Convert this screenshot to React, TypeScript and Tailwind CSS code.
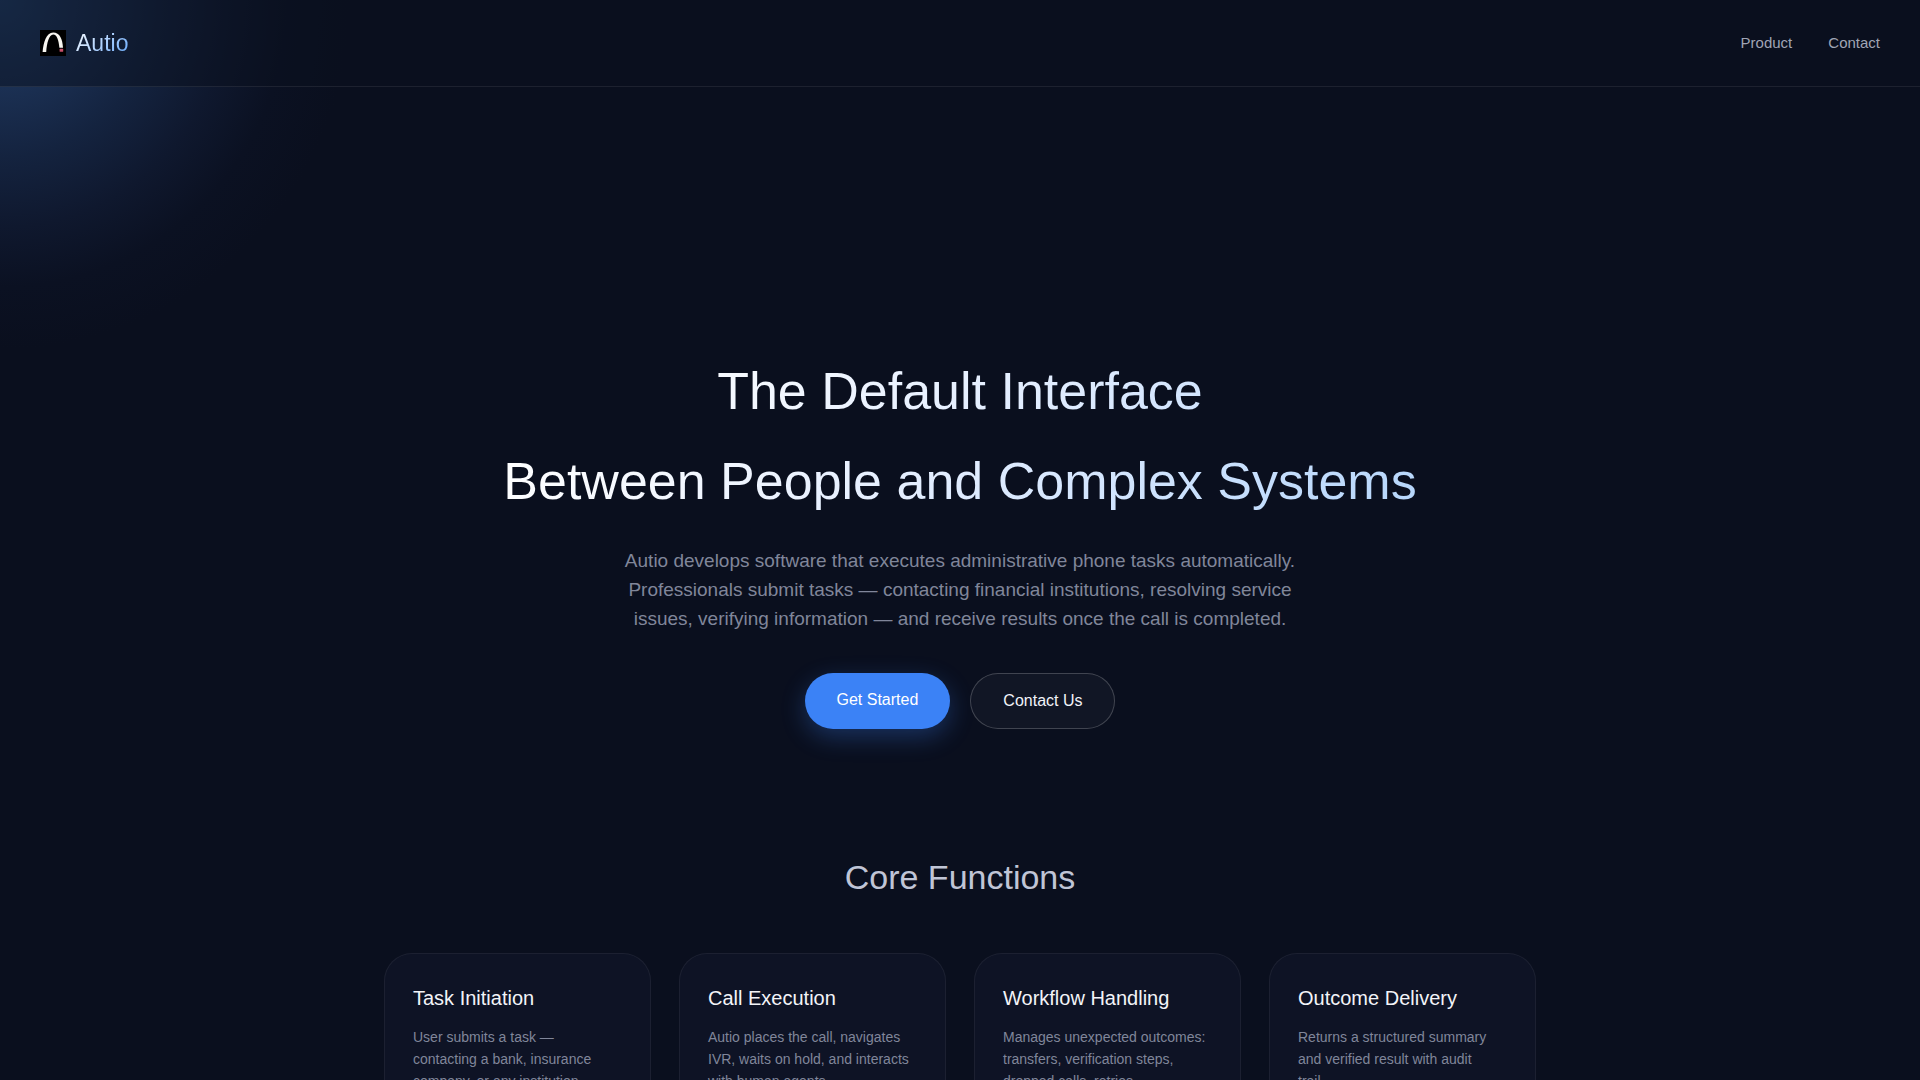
interface CoreFunction {
    title: string;
    lines: string[];
}

const navLinks = [
    { label: "Product", href: "#product" },
    { label: "Contact", href: "#contact" },
];

const coreFunctions: CoreFunction[] = [
    {
        title: "Task Initiation",
        lines: ["User submits a task —", "contacting a bank, insurance", "company, or any institution."],
    },
    {
        title: "Call Execution",
        lines: ["Autio places the call, navigates", "IVR, waits on hold, and interacts", "with human agents."],
    },
    {
        title: "Workflow Handling",
        lines: ["Manages unexpected outcomes:", "transfers, verification steps,", "dropped calls, retries."],
    },
    {
        title: "Outcome Delivery",
        lines: ["Returns a structured summary", "and verified result with audit", "trail."],
    },
];

function Logo() {
    return (
        <svg viewBox="0 0 26 26" className="size-[26px]" aria-hidden="true">
            <rect width="26" height="26" fill="#000" />
            <path
                d="M2.6 22C3.4 13 6.2 2.6 13.2 2.6C19.8 2.6 22.6 9.5 23 17.8H19.4C18.8 10.5 17 4.4 13.2 4.4C9 4.4 6.8 13 6.2 22Z"
                fill="#f8f6f0"
            />
            <rect x="19.6" y="18.8" width="3.6" height="3" rx="0.6" fill="#c8506a" />
        </svg>
    );
}

function Navbar() {
    return (
        <header className="relative z-10 border-b border-white/8 bg-[#0a0f1e]/50">
            <nav className="flex h-[86px] items-center justify-between px-10">
                <a href="#home" className="flex items-center gap-2.5">
                    <Logo />
                    <span className="bg-linear-135 from-white to-[#60a5fa] bg-clip-text text-[23px] leading-8 text-transparent">
                        Autio
                    </span>
                </a>
                <div className="flex items-center gap-9">
                    {navLinks.map((link) => (
                        <a key={link.label} href={link.href} className="text-[15px] text-[#a0a5b5] hover:text-white">
                            {link.label}
                        </a>
                    ))}
                </div>
            </nav>
        </header>
    );
}

function Hero() {
    return (
        <section id="home" className="flex flex-col items-center px-10 pt-[259px] text-center">
            <h1 className="bg-linear-135 from-white from-10% via-[#e4eeff] via-50% to-[#b4d5fb] bg-clip-text text-[52px] leading-[90px] text-transparent">
                The Default Interface
                <br />
                Between People and Complex Systems
            </h1>
            <p className="mt-5 max-w-[700px] text-[19px] leading-[29px] text-[#80869a]">
                Autio develops software that executes administrative phone tasks automatically. Professionals submit
                tasks — contacting financial institutions, resolving service issues, verifying information — and
                receive results once the call is completed.
            </p>
            <div className="mt-10 flex gap-5">
                <button
                    type="button"
                    className="h-14 rounded-full bg-[#3b82f6] px-8 pb-0.5 text-base text-white shadow-[0_8px_24px_rgba(59,130,246,0.3)]"
                >
                    Get Started
                </button>
                <button
                    type="button"
                    className="h-14 rounded-full border border-white/20 bg-white/3 px-8 text-base text-[#f1f3f9]"
                >
                    Contact Us
                </button>
            </div>
        </section>
    );
}

function CoreFunctions() {
    return (
        <section id="product" className="mx-auto mt-30 max-w-6xl pb-30">
            <h2 className="text-center text-[34px] leading-[56px] text-[#c0c5d6]">Core Functions</h2>
            <div className="mt-12 grid grid-cols-4 gap-7">
                {coreFunctions.map((item) => (
                    <article key={item.title} className="rounded-[28px] border border-white/6 bg-[#0e1325] p-7">
                        <h3 className="text-xl leading-8 text-[#f3f4f8]">{item.title}</h3>
                        <p className="mt-3 text-sm leading-[22px] whitespace-pre-line text-[#80869a]">
                            {item.lines.join("\n")}
                        </p>
                    </article>
                ))}
            </div>
        </section>
    );
}

export default function App() {
    return (
        <div className="relative h-screen overflow-hidden bg-[#0a0f1e] font-['Liberation_Sans',Arial,sans-serif]">
            {/* corner glow */}
            <div className="absolute top-0 left-0 size-[360px] bg-[radial-gradient(circle_350px_at_0_0,#22406a_0%,#1b3053_25%,#14233f_45%,#0f182e_65%,#0b1122_82%,#0a0f1e_100%)]" />
            <Navbar />
            <main className="relative">
                <Hero />
                <CoreFunctions />
            </main>
        </div>
    );
}
